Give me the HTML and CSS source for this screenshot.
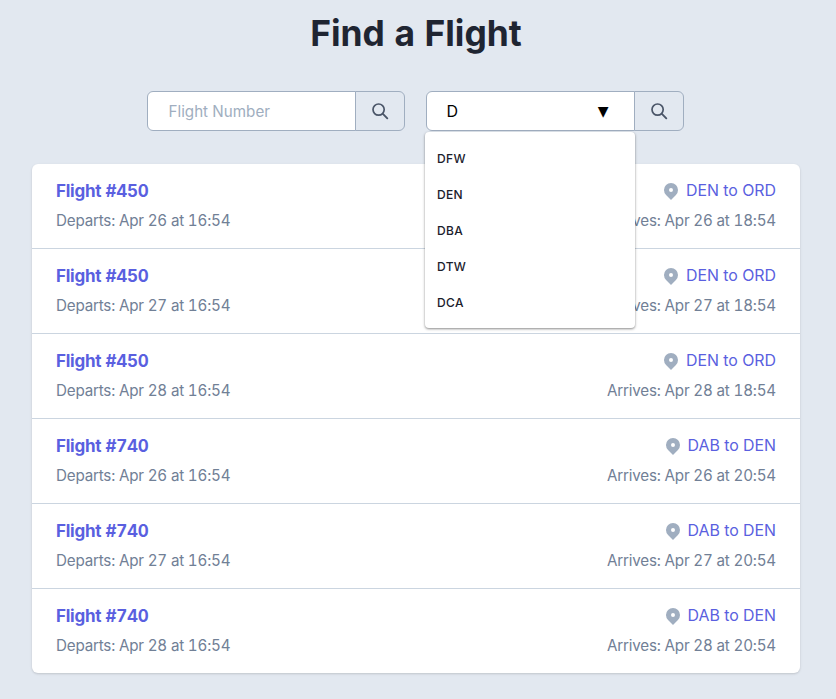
FILE: index.html
```html
<!DOCTYPE html>
<html lang="en">
<head>
<meta charset="utf-8">
<title>Find a Flight</title>
<link rel="stylesheet" href="styles.css">
</head>
<body>
<svg class="defs" width="0" height="0" aria-hidden="true">
  <symbol id="search" viewBox="0 0 20 20"><circle cx="8.6" cy="8.6" r="5.6" fill="none" stroke="currentColor" stroke-width="1.7"/><path d="M12.9 12.9l4.4 4.4" fill="none" stroke="currentColor" stroke-width="1.9" stroke-linecap="round"/></symbol>
  <symbol id="pin" viewBox="0 0 20 20"><path fill="currentColor" fill-rule="evenodd" d="M5.05 4.05a7 7 0 1 1 9.9 9.9L10 18.9l-4.95-4.95a7 7 0 0 1 0-9.9zM10 11a2 2 0 1 0 0-4 2 2 0 0 0 0 4z" clip-rule="evenodd"/></symbol>
</svg>
<main class="page">
  <h1 class="title">Find a Flight</h1>
  <div class="filters">
    <div class="group">
      <input class="field number-field" type="text" placeholder="Flight Number">
      <button class="search-btn" type="button" aria-label="Search"><svg class="search-icon"><use href="#search"/></svg></button>
    </div>
    <div class="group combo-group">
      <div class="field combo"><span>D</span><span class="caret">▼</span></div>
      <button class="search-btn" type="button" aria-label="Search"><svg class="search-icon"><use href="#search"/></svg></button>
      <ul class="menu">
        <li>DFW</li>
        <li>DEN</li>
        <li>DBA</li>
        <li>DTW</li>
        <li>DCA</li>
      </ul>
    </div>
  </div>
  <section class="list">
    <article class="row">
      <div class="line"><a class="flight">Flight #450</a><span class="route"><svg class="pin"><use href="#pin"/></svg>DEN to ORD</span></div>
      <div class="line times"><span>Departs: Apr 26 at 16:54</span><span>Arrives: Apr 26 at 18:54</span></div>
    </article>
    <article class="row">
      <div class="line"><a class="flight">Flight #450</a><span class="route"><svg class="pin"><use href="#pin"/></svg>DEN to ORD</span></div>
      <div class="line times"><span>Departs: Apr 27 at 16:54</span><span>Arrives: Apr 27 at 18:54</span></div>
    </article>
    <article class="row">
      <div class="line"><a class="flight">Flight #450</a><span class="route"><svg class="pin"><use href="#pin"/></svg>DEN to ORD</span></div>
      <div class="line times"><span>Departs: Apr 28 at 16:54</span><span>Arrives: Apr 28 at 18:54</span></div>
    </article>
    <article class="row">
      <div class="line"><a class="flight">Flight #740</a><span class="route"><svg class="pin"><use href="#pin"/></svg>DAB to DEN</span></div>
      <div class="line times"><span>Departs: Apr 26 at 16:54</span><span>Arrives: Apr 26 at 20:54</span></div>
    </article>
    <article class="row">
      <div class="line"><a class="flight">Flight #740</a><span class="route"><svg class="pin"><use href="#pin"/></svg>DAB to DEN</span></div>
      <div class="line times"><span>Departs: Apr 27 at 16:54</span><span>Arrives: Apr 27 at 20:54</span></div>
    </article>
    <article class="row">
      <div class="line"><a class="flight">Flight #740</a><span class="route"><svg class="pin"><use href="#pin"/></svg>DAB to DEN</span></div>
      <div class="line times"><span>Departs: Apr 28 at 16:54</span><span>Arrives: Apr 28 at 20:54</span></div>
    </article>
  </section>
</main>
</body>
</html>
```
FILE: styles.css
```css
* { box-sizing: border-box; }
html, body { margin: 0; padding: 0; }
body {
  background: #e2e8f0;
  font-family: Inter, "Liberation Sans", sans-serif;
  font-variant-numeric: tabular-nums;
  color: #1a202c;
  height: 699px;
  overflow: hidden;
}
.defs { position: absolute; }
.page { padding: 0 36px 0 32px; }
.title {
  margin: 0;
  padding-top: 14px;
  height: 91px;
  font-size: 35.4px;
  line-height: 40px;
  font-weight: 700;
  text-align: center;
  color: #1f2532;
}
.filters {
  display: flex;
  justify-content: center;
  gap: 21px;
  height: 73px;
  margin-left: -2px;
}
.group { position: relative; display: flex; height: 40px; }
.field {
  width: 209px;
  height: 40px;
  padding: 0 20px;
  background: #fff;
  border: 1px solid #a0aec0;
  border-radius: 6px 0 0 6px;
  font: 15.2px/24px Inter, "Liberation Sans", sans-serif;
  outline: none;
}
.number-field { padding-left: 21px; }
.field::placeholder { color: #a0aec0; opacity: 1; }
.combo {
  display: flex;
  align-items: center;
  justify-content: space-between;
  color: #000;
  font-size: 16px;
  padding-right: 25px;
}
.caret { font: 14px/1 "DejaVu Sans", sans-serif; color: #000; }
.search-btn {
  width: 50px;
  height: 40px;
  margin-left: -1px;
  padding: 0;
  display: flex;
  align-items: center;
  justify-content: center;
  background: #e2e8f0;
  border: 1px solid #a0aec0;
  border-radius: 0 6px 6px 0;
  color: #4a5568;
}
.search-icon { width: 20px; height: 20px; }
.menu {
  position: absolute;
  z-index: 2;
  top: 41px;
  left: -1px;
  width: 210px;
  margin: 0;
  padding: 9px 0 7px;
  list-style: none;
  background: #fff;
  border-radius: 4px;
  box-shadow: 0 1px 3px rgba(0,0,0,.3), 0 1px 2px rgba(0,0,0,.2);
}
.menu li {
  height: 36px;
  padding-left: 12.5px;
  font-size: 12px;
  line-height: 36px;
  font-weight: 500;
  letter-spacing: .35px;
  color: #1a202c;
}
.list {
  background: #fff;
  border-radius: 6px;
  box-shadow: 0 1px 3px rgba(0,0,0,.1), 0 1px 2px rgba(0,0,0,.06);
  width: 768px;
}
.row {
  height: 85px;
  padding: 15px 24px 0;
  border-top: 1px solid #cbd5e0;
}
.row:first-child { border-top: 0; height: 84px; }
.line { display: flex; justify-content: space-between; align-items: center; }
.flight { font-size: 17px; line-height: 24px; font-weight: 700; letter-spacing: -.25px; color: #5a5fe0; }
.route { display: flex; align-items: center; font-size: 15.9px; line-height: 24px; color: #5a5fe0; }
.pin { width: 20px; height: 20px; margin-right: 5px; color: #a0aec0; }
.times { margin-top: 6px; font-size: 15.2px; line-height: 24px; letter-spacing: -.2px; color: #718096; }
```
